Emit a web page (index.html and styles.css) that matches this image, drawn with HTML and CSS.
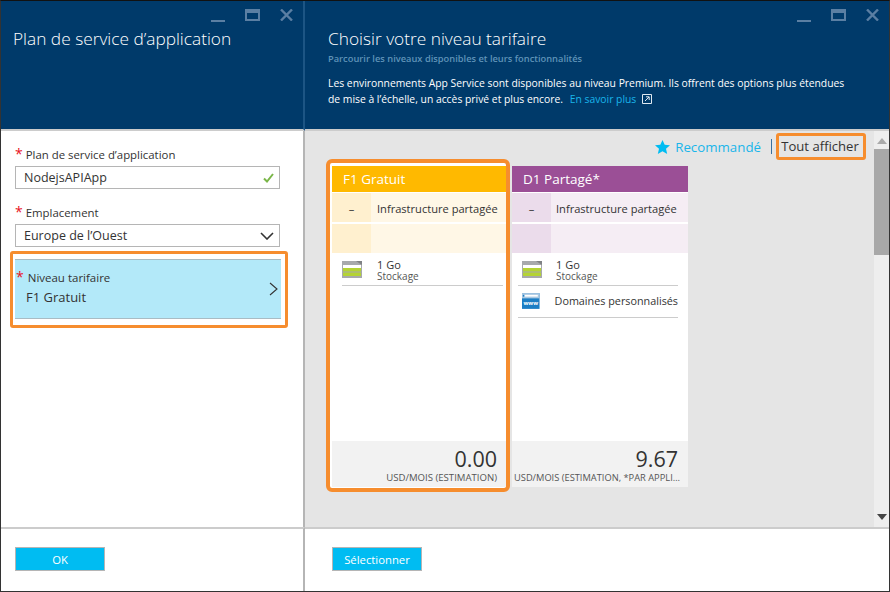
FILE: index.html
```html
<!DOCTYPE html>
<html lang="fr">
<head>
  <meta charset="UTF-8" />
  <title>Plan de service d'application</title>
  <link rel="stylesheet" href="styles.css">
</head>
<body>
  <div class="window">
    <!-- Left blade -->
    <section class="blade blade-left">
      <header class="blade-header">
        <div class="controls">
          <span class="ctl-min"></span>
          <span class="ctl-max"></span>
          <svg class="ctl-close" width="13" height="12" viewBox="0 0 13 12"><path d="M1 .5l11 11M12 .5l-11 11" stroke="#5b7fa3" stroke-width="2.4" fill="none"/></svg>
        </div>
        <h1 class="blade-title">Plan de service d’application</h1>
      </header>
      <div class="blade-body form">
        <label class="field-label"><span class="req">*</span>Plan de service d’application</label>
        <div class="input">
          <span>NodejsAPIApp</span>
          <svg width="11" height="10" viewBox="0 0 11 10"><path d="M1 5.5l3 3 6-7.5" stroke="#7ab648" stroke-width="2" fill="none"/></svg>
        </div>
        <label class="field-label second"><span class="req">*</span>Emplacement</label>
        <div class="input">
          <span>Europe de l’Ouest</span>
          <svg width="14" height="8" viewBox="0 0 14 8"><path d="M1 1l6 6 6-6" stroke="#333" stroke-width="1.6" fill="none"/></svg>
        </div>
        <div class="tier-picker-frame">
          <div class="tier-picker">
            <div class="picker-text">
              <div class="picker-label"><span class="req">*</span>Niveau tarifaire</div>
              <div class="picker-value">F1 Gratuit</div>
            </div>
            <svg width="9" height="14" viewBox="0 0 9 14"><path d="M1 1l7 6-7 6" stroke="#333" stroke-width="1.1" fill="none"/></svg>
          </div>
        </div>
      </div>
      <footer class="blade-footer">
        <button class="btn">OK</button>
      </footer>
    </section>

    <!-- Right blade -->
    <section class="blade blade-right">
      <header class="blade-header">
        <div class="controls">
          <span class="ctl-min"></span>
          <span class="ctl-max"></span>
          <svg class="ctl-close" width="13" height="12" viewBox="0 0 13 12"><path d="M1 .5l11 11M12 .5l-11 11" stroke="#5b7fa3" stroke-width="2.4" fill="none"/></svg>
        </div>
        <h1 class="blade-title">Choisir votre niveau tarifaire</h1>
        <p class="blade-sub">Parcourir les niveaux disponibles et leurs fonctionnalités</p>
        <p class="blade-info">Les environnements App Service sont disponibles au niveau Premium. Ils offrent des options plus étendues<br>de mise à l’échelle, un accès privé et plus encore. <a class="info-link" href="#">En savoir plus</a>
          <svg class="ext-icon" width="10" height="10" viewBox="0 0 10 10"><path d="M.5.5h9v9h-9zM3 7l4-4M4 2.8h3.2V6" stroke="#dfe8f0" fill="none"/></svg>
        </p>
      </header>
      <div class="blade-body pane">
        <div class="pane-main">
          <div class="toolbar">
            <svg width="15" height="14" viewBox="0 0 15 14"><path d="M7.5 0l2.2 4.8 5.3.5-4 3.4 1.2 5.3-4.7-2.8-4.7 2.8 1.2-5.3-4-3.4 5.3-.5z" fill="#00bcf2"/></svg>
            <a class="rec-link" href="#">Recommandé</a>
            <span class="tool-sep"></span>
            <span class="show-all">Tout afficher</span>
          </div>
          <div class="tiers">
            <div class="tier-frame">
              <article class="tier tier-free">
                <h2 class="tier-head">F1 Gratuit</h2>
                <div class="tier-row"><span class="tier-cell-a">–</span><span class="tier-cell-b">Infrastructure partagée</span></div>
                <div class="tier-row"><span class="tier-cell-a"></span><span class="tier-cell-b"></span></div>
                <div class="tier-features">
                  <div class="feature">
                    <svg class="feature-icon" width="20" height="17" viewBox="0 0 20 17"><rect width="20" height="17" fill="#a7a9ac"/><path d="M14 0h6v4z" fill="#7f8184"/><rect x="1" y="4" width="18" height="3" fill="#fff"/><rect x="1" y="7" width="18" height="3.5" fill="#b4d334"/><rect x="1" y="11.5" width="18" height="3.5" fill="#b4d334"/></svg>
                    <div><div class="feature-name">1 Go</div><div class="feature-note">Stockage</div></div>
                  </div>
                </div>
                <div class="tier-price">
                  <div class="price">0.00</div>
                  <div class="price-note">USD/MOIS (ESTIMATION)</div>
                </div>
              </article>
            </div>
            <article class="tier tier-shared">
              <h2 class="tier-head">D1 Partagé*</h2>
              <div class="tier-row"><span class="tier-cell-a">–</span><span class="tier-cell-b">Infrastructure partagée</span></div>
              <div class="tier-row"><span class="tier-cell-a"></span><span class="tier-cell-b"></span></div>
              <div class="tier-features">
                <div class="feature">
                  <svg class="feature-icon" width="20" height="17" viewBox="0 0 20 17"><rect width="20" height="17" fill="#a7a9ac"/><path d="M14 0h6v4z" fill="#7f8184"/><rect x="1" y="4" width="18" height="3" fill="#fff"/><rect x="1" y="7" width="18" height="3.5" fill="#b4d334"/><rect x="1" y="11.5" width="18" height="3.5" fill="#b4d334"/></svg>
                  <div><div class="feature-name">1 Go</div><div class="feature-note">Stockage</div></div>
                </div>
                <div class="feature feature-single">
                  <svg class="feature-icon" width="20" height="18" viewBox="0 0 20 18"><rect width="20" height="18" fill="#1b7dc4"/><rect width="20" height="6" fill="#a9c8e2"/><rect x="3" y="2" width="15" height="2" fill="#fff"/><rect x="1" y="2" width="1.5" height="2" fill="#1b7dc4"/><text x="10" y="14" text-anchor="middle" class="www">www</text></svg>
                  <div class="feature-name">Domaines personnalisés</div>
                </div>
              </div>
              <div class="tier-price">
                <div class="price price-shared">9.67</div>
                <div class="price-note note-shared">USD/MOIS (ESTIMATION, *PAR APPLICATION)</div>
              </div>
            </article>
          </div>
        </div>
        <div class="scrollbar">
          <span class="arrow-up"></span>
          <span class="thumb"></span>
          <span class="arrow-down"></span>
        </div>
      </div>
      <footer class="blade-footer">
        <button class="btn">Sélectionner</button>
      </footer>
    </section>
  </div>
</body>
</html>
```

FILE: styles.css
```css
/* Two blades side by side */
html, body {
  margin: 0;
  padding: 0;
  height: 100%;
}
body {
  font-family: "Open Sans", "Noto Sans", Arial, sans-serif;
  color: #333;
  background-color: #fff;
}
.window {
  box-sizing: border-box;
  width: 890px;
  height: 592px;
  border: 1px solid #333;
  border-top-color: #111;
  display: flex;
}
.blade {
  display: flex;
  flex-direction: column;
}
.blade-left {
  width: 304px;
}
.blade-right {
  flex: 1;
  min-width: 0;
}
.blade-header {
  box-sizing: border-box;
  height: 130px;
  background-color: #003a6a;
  border-bottom: 2px solid #ccc;
  position: relative;
  color: #fff;
}
.blade-left .blade-header {
  border-right: 2px solid #1d5584;
}
.blade-body {
  flex: 1;
  min-height: 0;
}
.blade-footer {
  box-sizing: border-box;
  height: 64px;
  border-top: 2px solid #ccc;
  padding: 18px 14px 0;
}
.blade-left .blade-body,
.blade-left .blade-footer {
  border-right: 2px solid #b5b5b5;
}
.blade-right .blade-header {
  padding-left: 23px;
}
.blade-right .blade-footer {
  padding-left: 27px;
}

/* Window controls */
.controls {
  position: absolute;
  top: 8px;
  right: 10px;
  display: flex;
  align-items: flex-start;
  gap: 20px;
}
.ctl-min {
  width: 14px;
  height: 2px;
  margin-top: 11px;
  background-color: #5b7fa3;
}
.ctl-max {
  box-sizing: border-box;
  width: 15px;
  height: 12px;
  border: 2px solid #5b7fa3;
  border-top-width: 4px;
}
.blade-title {
  margin: 0;
  padding: 26px 0 0 12px;
  font-size: 17.3px;
  font-weight: 300;
  line-height: 24px;
  color: #fff;
}
.blade-right .blade-title {
  padding-left: 0;
}
.blade-sub {
  margin: 1px 0 0;
  font-size: 9.3px;
  font-weight: 600;
  line-height: 14px;
  color: #5f93b8;
}
.blade-info {
  margin: 9px 0 0;
  font-size: 10.35px;
  line-height: 16px;
  color: #fff;
}
.info-link {
  color: #19b5ea;
  text-decoration: none;
  margin-left: 4px;
}
.ext-icon {
  vertical-align: -1px;
  margin-left: 3px;
}

/* Left form */
.form {
  padding: 15px 0 0 14px;
}
.req {
  color: #e81123;
  font-size: 14px;
  line-height: 10px;
  margin-right: 3px;
}
.field-label {
  display: block;
  font-size: 11.4px;
  line-height: 18px;
  margin-bottom: 2px;
}
.second {
  margin-top: 15px;
}
.input {
  box-sizing: border-box;
  width: 265px;
  height: 23px;
  border: 1px solid #b5b5b5;
  padding: 0 5px 0 8px;
  display: flex;
  align-items: center;
  justify-content: space-between;
  font-size: 12.5px;
}
.tier-picker-frame {
  box-sizing: border-box;
  width: 278px;
  height: 77px;
  margin: 4px 0 0 -5px;
  border: 3px solid #f68d2e;
  border-radius: 3px;
  padding: 5px 0 0 2px;
}
.tier-picker {
  box-sizing: border-box;
  width: 266px;
  height: 60px;
  background-color: #b3e9f9;
  border-top: 1px solid #a9bcc4;
  border-bottom: 1px solid #a9bcc4;
  display: flex;
  align-items: center;
  justify-content: space-between;
  padding-right: 3px;
}
.picker-text {
  margin-top: -2px;
}
.picker-label {
  font-size: 11.5px;
  line-height: 18px;
}
.picker-label .req {
  margin-left: 1px;
  margin-right: 4px;
}
.picker-value {
  font-size: 13px;
  line-height: 20px;
  padding-left: 11px;
}

/* Tier pane */
.pane {
  display: flex;
  background-color: #e5e5e5;
}
.pane-main {
  flex: 1;
  min-width: 0;
  padding-left: 21px;
}
.toolbar {
  display: flex;
  align-items: center;
  justify-content: flex-end;
  height: 27px;
  margin: 2px 0 -1px;
  padding-right: 8px;
}
.rec-link {
  color: #19b5ea;
  text-decoration: none;
  font-size: 13.3px;
  margin-left: 5px;
}
.tool-sep {
  width: 1px;
  height: 15px;
  background-color: #3a6f9c;
  margin: 0 4px 0 10px;
}
.show-all {
  box-sizing: border-box;
  height: 27px;
  width: 90px;
  border: 3px solid #f68d2e;
  border-radius: 3px;
  padding-right: 2px;
  font-size: 13.1px;
  line-height: 21px;
  text-align: center;
}
.tiers {
  display: flex;
  align-items: flex-start;
  gap: 2px;
}
.tier-frame {
  box-sizing: border-box;
  width: 184px;
  height: 333px;
  border: 4px solid #f68d2e;
  border-radius: 6px;
  padding: 3px 0 0 2px;
  background-color: #fff;
}
.tier {
  box-sizing: border-box;
  display: flex;
  flex-direction: column;
  width: 174px;
  height: 321px;
  background-color: #fff;
}
.tier-shared {
  width: 176px;
  margin-top: 7px;
}
.tier-head {
  margin: 0;
  height: 26px;
  font-size: 13.5px;
  font-weight: 400;
  line-height: 26px;
  padding-left: 11px;
  color: #fff;
}
.tier-free .tier-head {
  background-color: #ffb900;
}
.tier-shared .tier-head {
  background-color: #9b4f96;
}
.tier-row {
  display: flex;
  height: 29px;
  margin-top: 1px;
  font-size: 11.1px;
  line-height: 31px;
}
.tier-row + .tier-row {
  margin-top: 2px;
}
.tier-cell-a {
  width: 39px;
  text-align: center;
}
.tier-cell-b {
  flex: 1;
  padding-left: 6px;
  white-space: nowrap;
}
.tier-shared .tier-cell-b {
  padding-left: 5px;
}
.tier-free .tier-cell-a {
  background-color: #fff0cf;
}
.tier-free .tier-cell-b {
  background-color: #fff7e6;
}
.tier-shared .tier-cell-a {
  background-color: #ebdceb;
}
.tier-shared .tier-cell-b {
  background-color: #f5edf4;
}
.tier-features {
  flex: 1;
  padding: 8px 3px 0 10px;
}
.tier-shared .tier-features {
  padding: 8px 10px 0 6px;
}
.feature {
  display: flex;
  align-items: flex-start;
  gap: 15px;
  height: 24px;
  border-bottom: 1px solid #ccc;
}
.tier-shared .feature {
  gap: 14px;
}
.tier-shared .feature-single {
  gap: 15px;
}
.tier-shared .feature-icon {
  margin-left: 4px;
}
.feature-single {
  box-sizing: border-box;
  height: 32px;
  padding-bottom: 2px;
  align-items: center;
}
.feature-name {
  font-size: 11px;
  line-height: 12px;
  white-space: nowrap;
  margin-top: -2px;
}
.feature-single .feature-name {
  font-size: 10.8px;
  margin-top: 0;
}
.feature-note {
  font-size: 10px;
  line-height: 10px;
  color: #555;
}
.www {
  font-family: "Open Sans", sans-serif;
  font-size: 6.5px;
  font-weight: 700;
  fill: #fff;
}
.tier-price {
  box-sizing: border-box;
  height: 46px;
  background-color: #f2f2f2;
  text-align: right;
  padding: 4px 9px 0 0;
}
.price {
  font-size: 21.5px;
  line-height: 28px;
}
.price-shared {
  padding-right: 1px;
}
.price-note {
  font-size: 9.6px;
  line-height: 9px;
  color: #555;
  white-space: nowrap;
}
.note-shared {
  width: 168px;
  margin-left: 2px;
  font-size: 9.3px;
  overflow: hidden;
  text-overflow: ellipsis;
  text-align: left;
}

/* Scrollbar */
.scrollbar {
  width: 15px;
  display: flex;
  flex-direction: column;
  align-items: center;
  background-color: #eee;
  position: relative;
}
.arrow-up {
  margin-top: 7px;
  border: 5px solid transparent;
  border-top: 0;
  border-bottom: 6px solid #aaa;
}
.thumb {
  width: 100%;
  height: 106px;
  margin-top: 5px;
  background-color: #a8a8a8;
}
.arrow-down {
  margin-top: auto;
  margin-bottom: 7px;
  border: 5px solid transparent;
  border-bottom: 0;
  border-top: 6px solid #444;
}

/* Footer buttons */
.btn {
  box-sizing: border-box;
  display: block;
  width: 90px;
  height: 24px;
  padding: 0;
  background-color: #00bcf2;
  border: 1px solid #b5b5b5;
  color: #fff;
  font-family: inherit;
  font-size: 11.3px;
}
```
